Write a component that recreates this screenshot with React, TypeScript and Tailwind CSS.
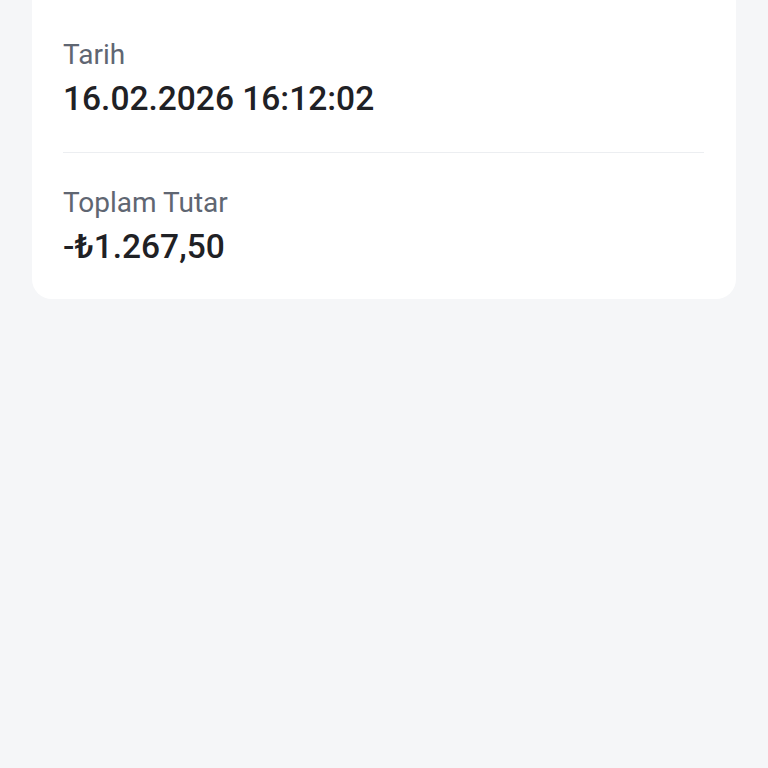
export default function App() {
  const rows = [
    { label: 'Tarih', value: '16.02.2026 16:12:02', pad: 'pt-[38px] pb-[32px]' },
    { label: 'Toplam Tutar', value: '-₺1.267,50', pad: 'pt-[33px] pb-[31px]' },
  ]

  return (
    <div className="min-h-[768px] bg-[#f5f6f8] px-8 font-['Roboto',sans-serif]">
      <div className="rounded-b-[20px] bg-white pl-[31px] pr-8">
        {rows.map((row, i) => (
          <div
            key={row.label}
            className={`${row.pad} ${i < rows.length - 1 ? 'border-b border-[#eceef1]' : ''}`}
          >
            <div className="text-[28px] leading-[34px] text-[#5f6672]">{row.label}</div>
            <div className="mt-[6px] text-[33.5px] leading-[42px] font-medium text-[#1f2125]">{row.value}</div>
          </div>
        ))}
      </div>
    </div>
  )
}
